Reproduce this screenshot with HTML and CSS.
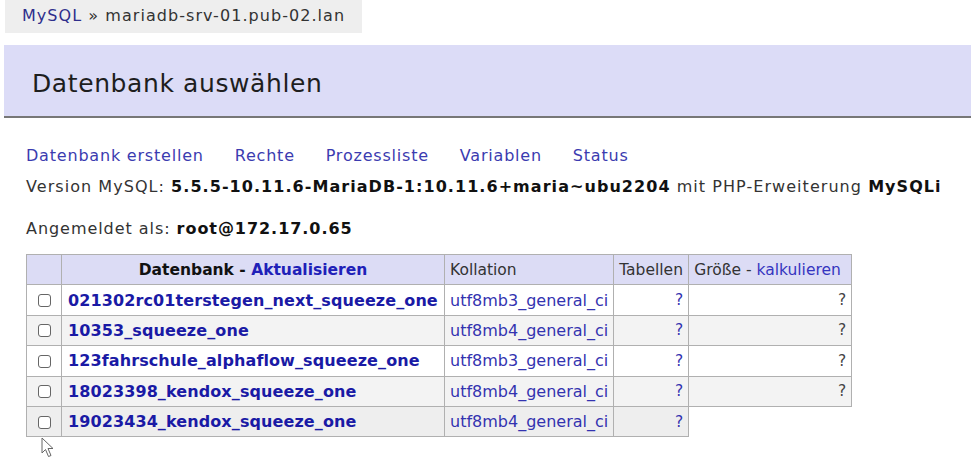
FILE: index.html
```
<!DOCTYPE html>
<html lang="de">
<head>
<meta charset="utf-8">
<title>Datenbank auswählen</title>
<link rel="stylesheet" href="styles.css">
</head>
<body>
<div class="breadcrumb"><a class="crumb-link" href="#">MySQL</a> » mariadb-srv-01.pub-02.lan</div>
<h2 class="title">Datenbank auswählen</h2>
<div class="content">
  <p class="links">
    <a href="#">Datenbank erstellen</a>
    <a href="#">Rechte</a>
    <a href="#">Prozessliste</a>
    <a href="#">Variablen</a>
    <a href="#">Status</a>
  </p>
  <p class="info">Version MySQL: <b>5.5.5-10.11.6-MariaDB-1:10.11.6+maria~ubu2204</b> mit PHP-Erweiterung <b>MySQLi</b></p>
  <p class="info login">Angemeldet als: <b>root@172.17.0.65</b></p>
  <table class="dbs">
    <thead>
      <tr>
        <td class="chk"></td>
        <th class="name-h">Datenbank - <a href="#">Aktualisieren</a></th>
        <td class="coll-h">Kollation</td>
        <td class="tab-h">Tabellen</td>
        <td class="size-h">Größe - <a href="#">kalkulieren</a></td>
      </tr>
    </thead>
    <tbody>
      <tr>
        <td class="chk"><span class="box"></span></td>
        <th class="name"><a href="#">021302rc01terstegen_next_squeeze_one</a></th>
        <td class="coll"><a href="#">utf8mb3_general_ci</a></td>
        <td class="num"><a href="#">?</a></td>
        <td class="num size">?</td>
      </tr>
      <tr class="odd">
        <td class="chk"><span class="box"></span></td>
        <th class="name"><a href="#">10353_squeeze_one</a></th>
        <td class="coll"><a href="#">utf8mb4_general_ci</a></td>
        <td class="num"><a href="#">?</a></td>
        <td class="num size">?</td>
      </tr>
      <tr>
        <td class="chk"><span class="box"></span></td>
        <th class="name"><a href="#">123fahrschule_alphaflow_squeeze_one</a></th>
        <td class="coll"><a href="#">utf8mb3_general_ci</a></td>
        <td class="num"><a href="#">?</a></td>
        <td class="num size">?</td>
      </tr>
      <tr class="odd">
        <td class="chk"><span class="box"></span></td>
        <th class="name"><a href="#">18023398_kendox_squeeze_one</a></th>
        <td class="coll"><a href="#">utf8mb4_general_ci</a></td>
        <td class="num"><a href="#">?</a></td>
        <td class="num size">?</td>
      </tr>
      <tr class="hover last">
        <td class="chk"><span class="box"></span></td>
        <th class="name"><a href="#">19023434_kendox_squeeze_one</a></th>
        <td class="coll"><a href="#">utf8mb4_general_ci</a></td>
        <td class="num"><a href="#">?</a></td>
        <td class="empty"></td>
      </tr>
    </tbody>
  </table>
</div>
<svg class="cursor" width="14" height="22" viewBox="0 0 14 22" aria-hidden="true">
  <path d="M1 1 L1 16 L4.5 12.5 L7.5 19.5 L10 18.5 L7 11.5 L12 11.5 Z" fill="#fff" stroke="#666" stroke-width="1" stroke-linejoin="round"/>
</svg>
</body>
</html>
```
FILE: styles.css
```
html, body {
  margin: 0;
  padding: 0;
  background: #fff;
}
body {
  font-family: "DejaVu Sans", Verdana, sans-serif;
  font-size: 16px;
  color: #222;
  position: relative;
  min-height: 466px;
}
a {
  text-decoration: none;
  color: #2c2ca8;
}
.breadcrumb {
  display: inline-block;
  margin-left: 5px;
  height: 33px;
  line-height: 31px;
  padding: 0 17px 0 17px;
  background: #eeeeee;
  color: #333;
  font-size: 16px;
  letter-spacing: 1.05px;
  white-space: nowrap;
}
.crumb-link {
  color: #2e2e8c;
}
.title {
  margin: 12px 0 0 4px;
  height: 67px;
  line-height: 70px;
  padding: 4px 0 0 28px;
  background: #dcdcf7;
  border-bottom: 2px solid #777;
  font-weight: normal;
  font-size: 25px;
  letter-spacing: 0.6px;
  color: #1e1e1e;
}
.content {
  padding: 0 0 0 26px;
}
.links {
  margin: 26px 0 0 0;
  line-height: 24px;
  font-size: 16px;
  letter-spacing: 0.8px;
}
.links a {
  color: #3b3bb0;
  margin-right: 25px;
}
.info {
  margin: 8px 0 0 0;
  line-height: 22px;
  font-size: 16px;
  letter-spacing: 1.05px;
  color: #333;
}
.info b {
  color: #111;
}
.login {
  margin-top: 20px;
  letter-spacing: 0.95px;
}
.dbs {
  margin-top: 14px;
  border-collapse: collapse;
  font-size: 15.5px;
}
.dbs td, .dbs th {
  border: 1.5px solid #b0b0b0;
  height: 29.4px;
  padding: 0 5px;
  text-align: left;
  font-weight: normal;
  color: #333;
  white-space: nowrap;
}
.dbs thead td, .dbs thead th {
  background: #dcdcf5;
}
.dbs thead th {
  text-align: center;
  font-weight: bold;
  color: #111;
  padding: 0 6px;
}
.dbs thead th a {
  color: #2020b8;
}
.dbs .size-h a {
  color: #3535c0;
}
.dbs .chk {
  width: 22px;
  text-align: center;
  padding: 0 6px;
}
.box {
  display: inline-block;
  width: 11px;
  height: 11px;
  border: 1.5px solid #666;
  border-radius: 3px;
  background: #fff;
  vertical-align: middle;
}
.dbs th.name {
  font-weight: bold;
  width: 370px;
  padding: 0 6px;
}
.dbs th.name a {
  color: #1a1aa5;
  font-size: 16px;
  letter-spacing: 0.1px;
}
.dbs .coll {
  width: 156px;
}
.dbs .coll a {
  color: #3333b0;
  font-size: 16px;
}
.dbs .num {
  text-align: right;
  width: 64px;
}
.dbs .num a, .dbs .size {
  color: #3333b0;
}
.dbs .size {
  width: 152px;
  color: #444;
}
.dbs tbody tr.odd td, .dbs tbody tr.odd th {
  background: #f3f3f3;
}
.dbs tbody tr.hover td, .dbs tbody tr.hover th {
  background: #eeeeee;
}
.dbs tbody tr.last td.empty {
  border: none;
  background: #fff;
}
.cursor {
  position: absolute;
  left: 41px;
  top: 437px;
}
```
